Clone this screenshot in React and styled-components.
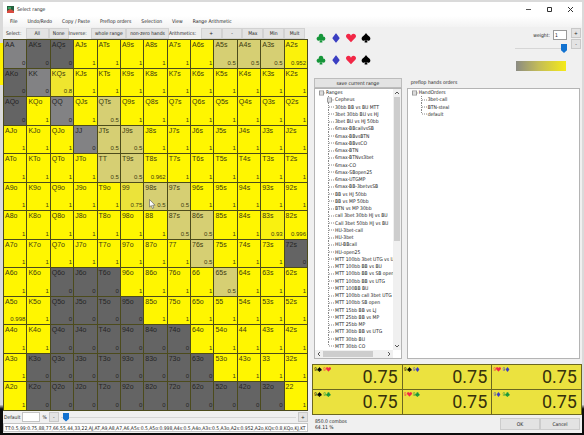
import { useState } from 'react'
import styled, { createGlobalStyle } from 'styled-components'
import {
  BsSuitClubFill,
  BsSuitDiamondFill,
  BsSuitHeartFill,
  BsSuitSpadeFill,
} from 'react-icons/bs'

const colors = {
  window: '#f0f0f0',
  button: '#e3e3e3',
  text: '#222222',
  accent: '#1272d0',
  combo: '#ebe23f',
  club: '#16963a',
  diamond: '#3b3fc2',
  heart: '#f22746',
  spade: '#000000',
}

const GlobalStyle = createGlobalStyle`
  * {
    box-sizing: border-box;
  }
  body {
    margin: 0;
    font-family: 'DejaVu Sans Condensed', 'Liberation Sans', sans-serif;
    font-size: 5px;
    line-height: 7px;
    color: ${colors.text};
  }
  button, input {
    font: inherit;
    color: inherit;
    margin: 0;
  }
`

const Desktop = styled.div`
  height: 100vh;
  padding: 2px 2px 2px 3px;
  background: linear-gradient(#fff200, #fff200) 0 43px / 3px 42px no-repeat,
    linear-gradient(#dadada 93%, #0c0c0c 94%);
`

const Window = styled.main`
  height: 100%;
  display: flex;
  flex-direction: column;
  background: ${colors.window};
  overflow: hidden;
`

const TitleBar = styled.header`
  flex: none;
  height: 14px;
  display: flex;
  align-items: center;
  gap: 3px;
  padding: 0 8px 0 4px;
  background: #ffffff;
`

const Title = styled.h1`
  flex: 1;
  margin: 0;
  font-size: 5px;
  font-weight: normal;
`

const WindowButtons = styled.div`
  display: flex;
  gap: 14px;
`

const WindowButton = styled.button`
  width: 7px;
  height: 7px;
  padding: 0;
  border: 0;
  background: none;
  svg {
    display: block;
  }
`

const MenuBar = styled.nav`
  flex: none;
  height: 11px;
  display: flex;
  align-items: center;
  gap: 10px;
  padding-left: 7px;
  background: linear-gradient(#ffffff, #f3f3f3);
`

const MenuItem = styled.button`
  padding: 0;
  border: 0;
  background: none;
  white-space: nowrap;
`

const Content = styled.div`
  flex: 1;
  min-height: 0;
  display: grid;
  grid-template-columns: minmax(0, 305fr) minmax(0, 270fr);
  gap: 4px;
`

const Column = styled.section`
  min-height: 0;
  display: flex;
  flex-direction: column;
`

const Toolbar = styled.div`
  flex: none;
  height: 12px;
  display: grid;
  grid-template-columns: 20fr 23fr 20fr 23fr 35fr 43fr 32fr repeat(5, 21fr);
  align-items: center;
  padding: 0 3px;
`

const ToolLabel = styled.span`
  white-space: nowrap;
`

const ToolButton = styled.button`
  height: 11px;
  padding: 0;
  border: 1px solid #d2d2d2;
  background: ${colors.button};
  line-height: 7px;
  white-space: nowrap;
`

const HandGrid = styled.div`
  flex: 1;
  min-height: 0;
  display: grid;
  grid-template-columns: repeat(13, minmax(0, 1fr));
  grid-template-rows: repeat(13, minmax(0, 1fr));
  gap: 1px;
  padding: 1px;
  background: #4c4b1c;
  font-family: 'Liberation Sans', Arial, sans-serif;
`

const HandCell = styled.button`
  position: relative;
  display: flex;
  flex-direction: column;
  justify-content: space-between;
  padding: 1px;
  border: 0;
  background: ${(props) => props.$color};
  color: ${(props) => (props.$empty ? '#252525' : '#3c3a10')};
  text-align: left;
`

const HandName = styled.span`
  font-size: 7px;
  line-height: 8px;
`

const HandWeight = styled.span`
  align-self: flex-end;
  font-size: 6px;
  line-height: 7px;
`

const Pointer = styled.svg`
  position: absolute;
  left: 5px;
  top: 16px;
`

const DefaultRow = styled.div`
  flex: none;
  height: 12px;
  display: flex;
  align-items: center;
  gap: 2px;
  padding-left: 1px;
`

const TextBox = styled.input`
  width: ${(props) => props.$width};
  height: 10px;
  padding: 0 1px;
  border: 1px solid ${(props) => props.$border || '#c4c4c4'};
  background: #ffffff;
`

const StepButton = styled.button`
  width: 10px;
  height: 10px;
  padding: 0;
  border: 1px solid #c8c8c8;
  background: ${colors.button};
  line-height: 6px;
`

const Slider = styled.input.attrs({ type: 'range' })`
  appearance: none;
  flex: ${(props) => (props.$grow ? 1 : 'none')};
  width: ${(props) => (props.$grow ? 'auto' : '52px')};
  min-width: 0;
  height: 9px;
  background: linear-gradient(#d6d6d6, #d6d6d6) center / 100% 1px no-repeat;
  &::-webkit-slider-thumb {
    appearance: none;
    width: 6px;
    height: 9px;
    background: ${colors.accent};
    clip-path: polygon(0 0, 100% 0, 100% 70%, 50% 100%, 0 70%);
  }
`

const RangeText = styled(TextBox)`
  flex: none;
  height: 9px;
  margin-bottom: 1px;
`

const TopPanel = styled.div`
  flex: none;
  height: 51px;
  display: flex;
  justify-content: space-between;
  padding-left: 4px;
`

const SuitRows = styled.div`
  display: grid;
  grid-template-columns: repeat(4, 10px);
  grid-template-rows: repeat(2, 22px);
  column-gap: 5px;
  align-items: center;
`

const SuitButton = styled.button`
  padding: 0;
  border: 0;
  background: none;
  color: ${(props) => props.$color};
  svg {
    display: block;
    width: 10px;
    height: 10px;
  }
`

const WeightPanel = styled.div`
  display: flex;
  align-items: flex-start;
  gap: 4px;
  padding: 1px 1px 0 0;
`

const WeightFields = styled.div`
  display: flex;
  flex-direction: column;
  align-items: flex-end;
  gap: 4px;
  padding-top: 2px;
`

const WeightLabel = styled.label`
  display: flex;
  align-items: center;
  gap: 3px;
`

const WeightScale = styled.div`
  width: 50px;
  height: 10px;
  margin-top: 4px;
  margin-right: 1px;
  background: linear-gradient(to right, #8b8b83, #c3bc58 45%, #f5ea18);
`

const Steps = styled.div`
  display: flex;
  flex-direction: column;
  gap: 1px;
`

const Lists = styled.div`
  flex: 1;
  min-height: 0;
  display: grid;
  grid-template-columns: minmax(0, 88fr) minmax(0, 174fr);
  grid-template-rows: 10px minmax(0, 1fr);
  column-gap: 5px;
  padding: 0 2px;
`

const SaveButton = styled.button`
  padding: 0;
  border: 1px solid #bcbcbc;
  background: ${colors.button};
`

const ListTitle = styled.h2`
  margin: 0;
  padding: 1px 4px;
  font-size: 5px;
  font-weight: normal;
`

const TreeBox = styled.div`
  min-height: 0;
  display: grid;
  grid-template-columns: minmax(0, 1fr) auto;
  grid-template-rows: minmax(0, 1fr) auto;
  border: 1px solid #b4b4b4;
  background: #ffffff;
`

const TreeView = styled.ul`
  min-height: 0;
  margin: 0;
  padding: 0 0 0 3px;
  display: grid;
  grid-template-rows: repeat(${(props) => props.$rows}, minmax(0, 1fr));
  overflow: hidden;
  list-style: none;
`

const TreeItem = styled.li`
  display: flex;
  align-items: center;
  min-width: 0;
  padding-left: ${(props) => (props.$root ? '0' : '9px')};
  white-space: nowrap;
`

const Branch = styled.svg`
  flex: none;
  width: 8px;
  height: 8px;
`

const ScrollBar = styled.div`
  display: flex;
  flex-direction: ${(props) => (props.$vertical ? 'column' : 'row')};
  align-items: center;
  width: ${(props) => (props.$vertical ? '8px' : 'auto')};
  height: ${(props) => (props.$vertical ? 'auto' : '8px')};
  background: #f0f0f0;
`

const ScrollThumb = styled.div`
  flex: ${(props) => props.$size};
  align-self: stretch;
  margin: ${(props) => (props.$vertical ? '0 1px' : '1px 0')};
  background: #cdcdcd;
`

const ScrollRest = styled.div`
  flex: ${(props) => props.$size};
`

const ComboGrid = styled.div`
  flex: none;
  display: grid;
  grid-template-columns: repeat(3, minmax(0, 1fr));
  grid-auto-rows: 24px;
  gap: 1px;
  margin-top: 5px;
  padding: 1px;
  background: #6b6720;
`

const ComboCell = styled.button`
  display: flex;
  justify-content: space-between;
  align-items: flex-start;
  padding: 0 4px 0 1px;
  border: 0;
  background: ${colors.combo};
`

const ComboCards = styled.span`
  display: flex;
  gap: 1px;
  padding-top: 2px;
`

const Card = styled.span`
  display: flex;
  align-items: center;
  color: ${(props) => props.$color};
  line-height: 5px;
  svg {
    width: 5px;
    height: 5px;
  }
`

const ComboWeight = styled.span`
  font-family: Roboto, sans-serif;
  font-size: 18px;
  line-height: 24px;
  color: #35300c;
`

const Footer = styled.footer`
  flex: none;
  height: 18px;
  display: flex;
  justify-content: space-between;
  align-items: center;
  padding: 0 2px 0 3px;
`

const Summary = styled.p`
  margin: 0;
  line-height: 6px;
`

const DialogButtons = styled.div`
  display: flex;
`

const DialogButton = styled.button`
  width: 40px;
  height: 12px;
  padding: 0;
  border: 1px solid #cccccc;
  background: ${colors.button};
`

const ranks = 'AKQJT98765432'.split('')

// everything that is not listed here is played with weight 1
const weights = {
  AA: 0, AKs: 0, AQs: 0, A5s: 0.5, A4s: 0.5, A3s: 0.5, A2s: 0.952,
  AKo: 0, KK: 0, KQs: 0.8,
  AQo: 0, QQ: 0, QTs: 0.5,
  JJ: 0, JTs: 0.5, J9s: 0.5,
  TT: 0.5, T9s: 0.5, T8s: 0.962,
  99: 0.75, '98s': 0.5, '97s': 0.5,
  '87s': 0.5, '86s': 0.5, '83s': 0.93, '82s': 0.996,
  '76s': 0.5, '72s': 0,
  '65s': 0.5, Q6o: 0, J6o: 0, T6o: 0,
  A5o: 0.998, Q5o: 0, J5o: 0, T5o: 0, '95o': 0,
  Q4o: 0, J4o: 0, T4o: 0, '94o': 0, '84o': 0, '74o': 0,
  K3o: 0, Q3o: 0, J3o: 0, T3o: 0, '93o': 0, '83o': 0, '73o': 0, '63o': 0,
  K2o: 0, Q2o: 0, J2o: 0, T2o: 0, '92o': 0, '82o': 0, '72o': 0, '62o': 0,
  '52o': 0, '42o': 0, '32o': 0,
}

const hands = ranks.flatMap((row, r) =>
  ranks.map((col, c) => {
    if (r === c) return row + col
    return c > r ? row + col + 's' : col + row + 'o'
  })
)

const getColor = (hand, weight) => {
  if (weight === 0) return hand.length === 2 ? '#828284' : '#646464'
  const t = (weight - 0.5) * 2
  return `rgb(${214 + 41 * t}, ${207 + 39 * t}, ${115 - 115 * t})`
}

const menus = [
  'File',
  'Undo/Redo',
  'Copy / Paste',
  'Preflop orders',
  'Selection',
  'View',
  'Range Arithmetic',
]

const suits = {
  club: BsSuitClubFill,
  diamond: BsSuitDiamondFill,
  heart: BsSuitHeartFill,
  spade: BsSuitSpadeFill,
}

const combos = [
  ['spade', 'heart'],
  ['spade', 'diamond'],
  ['heart', 'diamond'],
  ['spade', 'club'],
  ['heart', 'club'],
  ['diamond', 'club'],
]

const savedRanges = [
  'Cepheus',
  '30bb BB vs BU MTT',
  '3bet 30bb BU vs HJ',
  '3bet BU vs HJ 50bb',
  '6max-BBcallvsSB',
  '6max-BBvsBTN',
  '6max-BBvsCO',
  '6max-BTN',
  '6max-BTNvs3bet',
  '6max-CO',
  '6max-SBopen25',
  '6max-UTGMP',
  '6max-BB-3betvsSB',
  'BB vs HJ 50bb',
  'BB vs MP 50bb',
  'BTN vs MP 30bb',
  'call 3bet 30bb HJ vs BU',
  'Call 3bet 50bb HJ vs BU',
  'HU-3bet-call',
  'HU-3bet',
  'HU-BBcall',
  'HU-open25',
  'MTT 100bb 3bet UTG vs U',
  'MTT 100bb BB vs BU',
  'MTT 100bb BB vs SB open',
  'MTT 100bb BB vs UTG',
  'MTT 100BB BU',
  'MTT 100bb call 3bet UTG',
  'MTT 100bb SB open',
  'MTT 15bb BB vs LJ',
  'MTT 25bb BB vs MP',
  'MTT 25bb MP',
  'MTT 30bb BB vs UTG',
  'MTT 30bb BU',
  'MTT 30bb CO',
]

const handOrders = ['3bet-call', 'BTN-steal', 'default']

const rangeString =
  'TT:0.5,99:0.75,88,77,66,55,44,33,22,AJ,AT,A9,A8,A7,A6,A5s:0.5,A5o:0.998,A4s:0.5,A4o,A3s:0.5,A3o,A2s:0.952,A2o,KQs:0.8,KQo,KJ,KT,K'

function Suit({ name }) {
  const Icon = suits[name]
  return <Icon aria-hidden="true" />
}

function Arrow({ turn }) {
  return (
    <svg width="8" height="8" viewBox="0 0 8 8" aria-hidden="true">
      <path
        d="M2 5l2-2 2 2"
        transform={`rotate(${turn} 4 4)`}
        fill="none"
        stroke="#555"
      />
    </svg>
  )
}

function BranchLines({ root, box, last }) {
  return (
    <Branch viewBox="0 0 8 8" aria-hidden="true">
      {!root && (
        <path
          d={last ? 'M1.5 0v4' : 'M1.5 0v8'}
          stroke="#888"
          strokeDasharray="1 1"
        />
      )}
      {box ? (
        <g fill="#fff" stroke="#999">
          <rect x={root ? 1.5 : 0.5} y="2" width="4" height="4" />
          <path d={root ? 'M2 4h5' : 'M1 4h6'} strokeWidth="0.7" />
        </g>
      ) : (
        <path d="M2 4h5" stroke="#888" strokeDasharray="1 1" />
      )}
    </Branch>
  )
}

function Tree({ title, items, rows }) {
  return (
    <TreeView $rows={rows}>
      <TreeItem $root>
        <BranchLines root box />
        {title}
      </TreeItem>
      {items.map((item, i) => (
        <TreeItem key={item}>
          <BranchLines box={item === 'Cepheus'} last={i === items.length - 1} />
          {item}
        </TreeItem>
      ))}
    </TreeView>
  )
}

function App() {
  const [weight, setWeight] = useState(1)
  const [percent, setPercent] = useState(1)
  const [range, setRange] = useState(rangeString)

  return (
    <>
      <GlobalStyle />
      <Desktop>
        <Window>
          <TitleBar>
            <svg width="7" height="7" viewBox="0 0 7 7" aria-hidden="true">
              <path d="M0 0h7v7H0z" fill="#25613f" />
              <path d="M0 5l3-2 4 2v2H0z" fill="#d94b40" />
              <path d="M1 1h3v2H1z" fill="#3fa968" />
            </svg>
            <Title>Select range</Title>
            <WindowButtons>
              <WindowButton aria-label="Minimize">
                <svg width="7" height="7" stroke="#555">
                  <path d="M1 3.5h5" />
                </svg>
              </WindowButton>
              <WindowButton aria-label="Maximize">
                <svg width="7" height="7" stroke="#333" fill="none">
                  <path d="M1.5 1.5h4v4h-4z" />
                </svg>
              </WindowButton>
              <WindowButton aria-label="Close">
                <svg width="7" height="7" stroke="#333">
                  <path d="M1 1l5 5M6 1l-5 5" />
                </svg>
              </WindowButton>
            </WindowButtons>
          </TitleBar>
          <MenuBar>
            {menus.map((menu) => (
              <MenuItem key={menu}>{menu}</MenuItem>
            ))}
          </MenuBar>
          <Content>
            <Column>
              <Toolbar>
                <ToolLabel>Select:</ToolLabel>
                <ToolButton>All</ToolButton>
                <ToolButton>None</ToolButton>
                <ToolLabel>Inverse:</ToolLabel>
                <ToolButton>whole range</ToolButton>
                <ToolButton>non-zero hands</ToolButton>
                <ToolLabel>Arithmetics:</ToolLabel>
                <ToolButton>+</ToolButton>
                <ToolButton>-</ToolButton>
                <ToolButton>Max</ToolButton>
                <ToolButton>Min</ToolButton>
                <ToolButton>Mult</ToolButton>
              </Toolbar>
              <HandGrid>
                {hands.map((hand) => {
                  const value = weights[hand] ?? 1
                  return (
                    <HandCell
                      key={hand}
                      $color={getColor(hand, value)}
                      $empty={value === 0}
                    >
                      <HandName>{hand}</HandName>
                      <HandWeight>{value}</HandWeight>
                      {hand === '98s' && (
                        <Pointer width="7" height="10" viewBox="0 0 7 10">
                          <path
                            d="M.5.5v7.500l1.800-1.500 1.200 3 1.300-.6-1.200-2.700h2.400z"
                            fill="#fff"
                            stroke="#555"
                            strokeWidth="0.6"
                          />
                        </Pointer>
                      )}
                    </HandCell>
                  )
                })}
              </HandGrid>
              <DefaultRow>
                <label htmlFor="default-percent">Default</label>
                <TextBox id="default-percent" $width="18px" />
                <span>%</span>
                <StepButton>-</StepButton>
                <Slider
                  $grow
                  aria-label="Default percent"
                  min="0"
                  max="100"
                  value={percent}
                  onChange={(e) => setPercent(e.target.value)}
                />
                <StepButton>+</StepButton>
              </DefaultRow>
              <RangeText
                $width="100%"
                aria-label="Range"
                value={range}
                onChange={(e) => setRange(e.target.value)}
              />
            </Column>
            <Column>
              <TopPanel>
                <SuitRows>
                  {[0, 1].map((row) =>
                    Object.keys(suits).map((name) => (
                      <SuitButton
                        key={name + row}
                        $color={colors[name]}
                        aria-label={name}
                      >
                        <Suit name={name} />
                      </SuitButton>
                    ))
                  )}
                </SuitRows>
                <WeightPanel>
                  <WeightFields>
                    <WeightLabel>
                      weight:
                      <TextBox
                        $width="14px"
                        $border="#999"
                        value={weight}
                        onChange={(e) => setWeight(e.target.value)}
                      />
                    </WeightLabel>
                    <Slider
                      aria-label="Weight"
                      min="0"
                      max="1"
                      step="0.01"
                      value={weight}
                      onChange={(e) => setWeight(e.target.value)}
                    />
                    <WeightScale />
                  </WeightFields>
                  <Steps>
                    <StepButton>+</StepButton>
                    <StepButton>-</StepButton>
                  </Steps>
                </WeightPanel>
              </TopPanel>
              <Lists>
                <SaveButton>save current range</SaveButton>
                <ListTitle>preflop hands orders</ListTitle>
                <TreeBox>
                  <Tree title="Ranges" items={savedRanges} rows={36} />
                  <ScrollBar $vertical>
                    <Arrow turn={0} />
                    <ScrollThumb $vertical $size={145} />
                    <ScrollRest $size={102} />
                    <Arrow turn={180} />
                  </ScrollBar>
                  <ScrollBar>
                    <Arrow turn={270} />
                    <ScrollThumb $size={50} />
                    <ScrollRest $size={12} />
                    <Arrow turn={90} />
                  </ScrollBar>
                </TreeBox>
                <TreeBox>
                  <Tree title="HandOrders" items={handOrders} rows={37} />
                </TreeBox>
              </Lists>
              <ComboGrid>
                {combos.map((cards) => (
                  <ComboCell key={cards.join('-')}>
                    <ComboCards>
                      {cards.map((name) => (
                        <Card key={name} $color={colors[name]}>
                          9<Suit name={name} />
                        </Card>
                      ))}
                    </ComboCards>
                    <ComboWeight>0.75</ComboWeight>
                  </ComboCell>
                ))}
              </ComboGrid>
              <Footer>
                <Summary>
                  850.0 combos
                  <br />
                  64.11 %
                </Summary>
                <DialogButtons>
                  <DialogButton>OK</DialogButton>
                  <DialogButton>Cancel</DialogButton>
                </DialogButtons>
              </Footer>
            </Column>
          </Content>
        </Window>
      </Desktop>
    </>
  )
}

export default App
